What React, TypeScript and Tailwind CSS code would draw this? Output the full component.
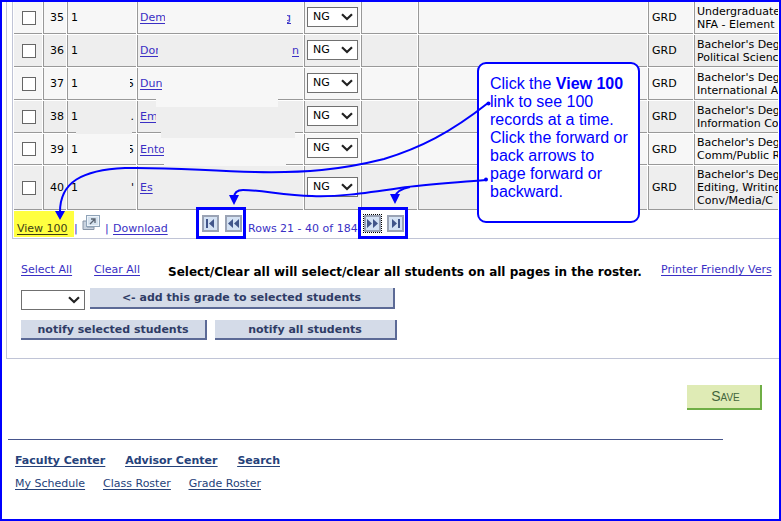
import React, { useState } from 'react';

type Row = {
  no: number;
  idStart: string;
  idEnd: string;
  name: string;
  nameWidth: string;
  nameEnd: string;
  nameEndWidth?: string;
  plan: string[];
  height: string;
  // strips that hide parts of the student's details
  masks: string[];
};

const rows: Row[] = [
  { no: 35, idStart: '1', idEnd: '', name: 'Dem', nameWidth: 'w-[25px]', nameEnd: 'g', nameEndWidth: 'mr-2 w-1', plan: ['Undergraduate', 'NFA - Element'], height: 'h-[32px]', masks: [] },
  { no: 36, idStart: '1', idEnd: '', name: 'Don', nameWidth: 'w-[18px]', nameEnd: 'n', plan: ["Bachelor's Deg", 'Political Scienc'], height: 'h-[32px]', masks: [] },
  { no: 37, idStart: '1', idEnd: '5', name: 'Dun', nameWidth: 'w-[22px]', nameEnd: '', plan: ["Bachelor's Deg", 'International A'], height: 'h-[32px]', masks: ['left-[18px] right-[25px] -bottom-[8px] h-[17px]'] },
  { no: 38, idStart: '1', idEnd: '.', name: 'Em', nameWidth: 'w-[16px]', nameEnd: '', plan: ["Bachelor's Deg", 'Information Co'], height: 'h-[32px]', masks: ['left-[23px] right-[8px] -bottom-[6px] h-[12px]', '-left-[62px] w-[56px] -bottom-[2px] h-[8px]'] },
  { no: 39, idStart: '1', idEnd: '5', name: 'Ento', nameWidth: 'w-[24px]', nameEnd: '', plan: ["Bachelor's Deg", 'Comm/Public R'], height: 'h-[31px]', masks: ['left-[26px] right-[17px] -bottom-[2px] h-[8px]'] },
  { no: 40, idStart: '1', idEnd: "'", name: 'Es', nameWidth: 'w-[14px]', nameEnd: '', plan: ["Bachelor's Deg", 'Editing, Writing', 'Conv/Media/C'], height: 'h-[44px]', masks: [] },
];

const Chevron = () => (
  <svg className="pointer-events-none absolute right-[5px] top-[6px]" width="12" height="8" viewBox="0 0 12 8">
    <path d="M1 1.2 L6 6 L11 1.2" fill="none" stroke="#222" strokeWidth="2.2" />
  </svg>
);

const GradeSelect = ({ label, wide, value }: { label: string; wide?: boolean; value: string }) => (
  <span className={`relative block h-5 ${wide ? 'w-16' : 'w-[51px]'}`}>
    <select
      aria-label={label}
      defaultValue={value}
      className="block h-5 w-full appearance-none border border-[#707070] bg-white pl-[5px] text-[11px] leading-[18px] text-black"
    >
      <option value={value}>{value}</option>
      <option value="A">A</option>
      <option value="B">B</option>
    </select>
    <Chevron />
  </span>
);

const PageButton = ({ label, d, focused }: { label: string; d: string; focused?: boolean }) => (
  <button
    type="button"
    aria-label={label}
    className={`h-[17px] w-[17px] border-2 border-[#9aa3b5] bg-[#d4e2f4] ${focused ? 'outline-1 outline-dotted outline-black' : ''}`}
  >
    <svg width="13" height="13" viewBox="0 0 13 13">
      <path d={d} fill="#41558a" />
    </svg>
  </button>
);

const WideButton = ({ children, className }: { children: React.ReactNode; className: string }) => (
  <button
    type="button"
    className={`border-b-2 border-r-2 border-[#5c6a96] bg-[#d4dbe8] text-[11px] font-bold text-[#2f3c66] ${className}`}
  >
    {children}
  </button>
);

const cell = 'border-b border-l border-[#999] p-0 align-middle';
const link = 'text-[#3a2fc4] underline underline-offset-2';

const App = () => {
  const [selected, setSelected] = useState<number[]>([]);

  const toggle = (no: number) => {
    setSelected(selected.includes(no) ? selected.filter((n) => n !== no) : [...selected, no]);
  };

  return (
    <div className="relative min-h-screen overflow-hidden border-2 border-[#0000ff] bg-white font-['DejaVu_Sans',Verdana,sans-serif] text-[11px] leading-[13px] text-black">
      <main>
        <section className="ml-1 border-b border-l border-[#c0c4d6] pb-[18px]">
          <div className="ml-[5px] overflow-hidden border-b border-l border-[#c0c4d6]">
            <table className="-mt-px w-full table-fixed border-separate border-spacing-px">
              <colgroup>
                <col className="w-[28px]" />
                <col className="w-[23px]" />
                <col className="w-[69px]" />
                <col className="w-[166px]" />
                <col className="w-[56px]" />
                <col className="w-[56px]" />
                <col />
                <col className="w-[45px]" />
                <col className="w-[84px]" />
              </colgroup>
              <tbody>
                {rows.map((row, i) => {
                  const bg = i % 2 ? 'bg-[#eeeeee]' : 'bg-[#f7f7f7]';
                  return (
                    <tr key={row.no} className={row.height}>
                      <td className={`border-b border-[#999] p-0 ${bg}`}>
                        <input
                          type="checkbox"
                          aria-label={`Select row ${row.no}`}
                          checked={selected.includes(row.no)}
                          onChange={() => toggle(row.no)}
                          className="ml-2 block h-[14px] w-[14px] appearance-none border border-[#666] bg-white checked:bg-[#41558a]"
                        />
                      </td>
                      <td className={`${cell} ${bg} pr-[2px] text-right`}>{row.no}</td>
                      <td className={`${cell} ${bg}`}>
                        <div className="flex justify-between pl-[3px] pr-[2px]">
                          <span>{row.idStart}</span>
                          <span className="flex w-[4px] justify-end overflow-hidden">{row.idEnd}</span>
                        </div>
                      </td>
                      <td className={`${cell} ${bg} relative`}>
                        <div className="flex justify-between pl-[2px] pr-1">
                          <a href="#student" className={`overflow-hidden ${row.nameWidth} ${link}`}>{row.name}</a>
                          {row.nameEnd && (
                            <a href="#student" className={`flex justify-end overflow-hidden ${row.nameEndWidth ?? ''} ${link}`}>
                              {row.nameEnd}
                            </a>
                          )}
                        </div>
                        {row.masks.map((mask) => (
                          <span key={mask} className={`absolute z-10 ${bg} ${mask}`} />
                        ))}
                      </td>
                      <td className={`${cell} ${bg} pb-[2px] pl-[2px]`}>
                        <GradeSelect label={`Grade for row ${row.no}`} value="NG" />
                      </td>
                      <td className={`${cell} ${bg}`} />
                      <td className={`${cell} ${bg}`} />
                      <td className={`${cell} ${bg} pl-[3px]`}>GRD</td>
                      <td className={`${cell} ${bg} overflow-hidden whitespace-nowrap pl-[2px]`}>
                        {row.plan.map((line) => (
                          <div key={line}>{line}</div>
                        ))}
                      </td>
                    </tr>
                  );
                })}
              </tbody>
            </table>

            <div className="flex h-[27px] items-start pl-px text-[#3a2fc4]">
              <a href="#all" className="h-[26px] w-[60px] bg-[#ffff40] pl-[3px] pt-[11px] text-[#3c3c14] underline underline-offset-2">
                View 100
              </a>
              <span className="w-2 pt-[11px]">|</span>
              <button type="button" aria-label="Zoom grid" className="mt-1 h-4 w-[18px]">
                <svg width="18" height="16" viewBox="0 0 18 16">
                  <path d="M1 6 h4 v6 h7 v2.500 h-11 z" fill="#c9d3df" stroke="#8794a6" />
                  <rect x="4.500" y="0.500" width="13" height="11" fill="#eef4fa" stroke="#8fa3b8" />
                  <rect x="6" y="2" width="10" height="8" fill="#d5e2ee" />
                  <path d="M8 9 L12.500 4.500 M9 4 h4 v4" fill="none" stroke="#5a6472" strokeWidth="1.300" />
                </svg>
              </button>
              <span className="w-[13px] pl-[5px] pt-[11px]">|</span>
              <a href="#download" className="w-[89px] pt-[11px] underline underline-offset-2">Download</a>
              <div className="flex gap-[6px] pt-1">
                <PageButton label="First page" d="M2 2h2v9H2z M10 2v9L5 6.500z" />
                <PageButton label="Previous page" d="M6 2v9L1 6.500z M12 2v9L7 6.500z" />
              </div>
              <span className="w-[122px] whitespace-nowrap pl-[6px] pt-[11px]">Rows 21 - 40 of 184</span>
              <div className="flex gap-[6px] pt-1">
                <PageButton label="Next page" d="M1 2v9L6 6.500z M7 2v9L12 6.500z" focused />
                <PageButton label="Last page" d="M3 2v9L8 6.500z M9 2h2v9H9z" />
              </div>
            </div>
          </div>

          <div className="flex items-start whitespace-nowrap pl-[14px] pt-6">
            <a href="#select" className={`mr-[22px] ${link}`}>Select All</a>
            <a href="#clear" className={`mr-7 ${link}`}>Clear All</a>
            <b className="pt-[3px] text-[12px] leading-[13px]">Select/Clear all will select/clear all students on all pages in the roster.</b>
            <div className="ml-auto w-[118px] pb-1">
              <a href="#print" className={link}>Printer Friendly Vers</a>
            </div>
          </div>
          <div className="flex items-start gap-[5px] pl-[14px] pt-2">
            <div className="pt-[2px]">
              <GradeSelect label="Grade to add" wide value="" />
            </div>
            <WideButton className="h-[21px] w-[305px]">&lt;- add this grade to selected students</WideButton>
          </div>
          <div className="flex gap-2 pl-[14px] pt-[10px]">
            <WideButton className="h-5 w-[186px]">notify selected students</WideButton>
            <WideButton className="h-5 w-[182px]">notify all students</WideButton>
          </div>
        </section>

        <div className="flex justify-end pr-[17px] pt-[26px]">
          <button
            type="button"
            className="h-[25px] w-[75px] border-b-2 border-r-2 border-[#6fae45] bg-[#dfebb5] pl-1 font-['Liberation_Sans',Arial,sans-serif] text-[14px] text-[#44663c] [font-variant:small-caps]"
          >
            Save
          </button>
        </div>
      </main>

      <footer className="ml-[6px] mr-14 mt-[29px] border-t border-[#46558c] pl-[7px] pt-[14px] text-[#26427a]">
        <nav className="flex gap-5 font-bold underline underline-offset-2">
          <a href="#faculty">Faculty Center</a>
          <a href="#advisor">Advisor Center</a>
          <a href="#search">Search</a>
        </nav>
        <nav className="flex gap-[18px] pt-[10px] underline underline-offset-2">
          <a href="#schedule">My Schedule</a>
          <a href="#class">Class Roster</a>
          <a href="#grade">Grade Roster</a>
        </nav>
      </footer>

      {/* help callout and its arrows */}
      <aside className="absolute left-[475px] top-[60px] z-20 h-[161px] w-[163px] whitespace-nowrap rounded-[9px] border-2 border-[#0000ff] bg-white pl-[11px] pt-[11px] font-['Liberation_Sans',Arial,sans-serif] text-[16px] leading-[18px] text-[#0000ff]">
        Click the <b>View 100</b><br />
        link to see 100<br />
        records at a time.<br />
        Click the forward or<br />
        back arrows to<br />
        page forward or<br />
        backward.
      </aside>
      <svg className="pointer-events-none absolute -left-[2px] -top-[2px] z-30" width="640" height="245" viewBox="0 0 640 245" fill="none" stroke="#0000ff">
        <rect x="197.500" y="208.500" width="47" height="29" strokeWidth="3" />
        <rect x="359.500" y="208.500" width="47" height="29" strokeWidth="3" />
        <path d="M488 103 C450 133 420 148 384 159 C340 170 305 173 255 172 C205 171 170 167 125 168 C82 170 60 182 60 212" strokeWidth="2" />
        <path d="M486 180 C450 183 425 184 400 188 C360 194 335 197 312 196 C285 196 262 190 243 190 C237 190 234 193 234 198" strokeWidth="2" />
        <path d="M410 187 C400 189 396 192 395 197" strokeWidth="2" />
        <g fill="#0000ff" stroke="none">
          <circle cx="488.500" cy="103.500" r="2" />
          <circle cx="486" cy="179.500" r="2" />
          <path d="M55 211h10l-5 9z M229 195h10l-5 10z M390 194h10l-5 10z" />
        </g>
      </svg>
    </div>
  );
};

export default App;
